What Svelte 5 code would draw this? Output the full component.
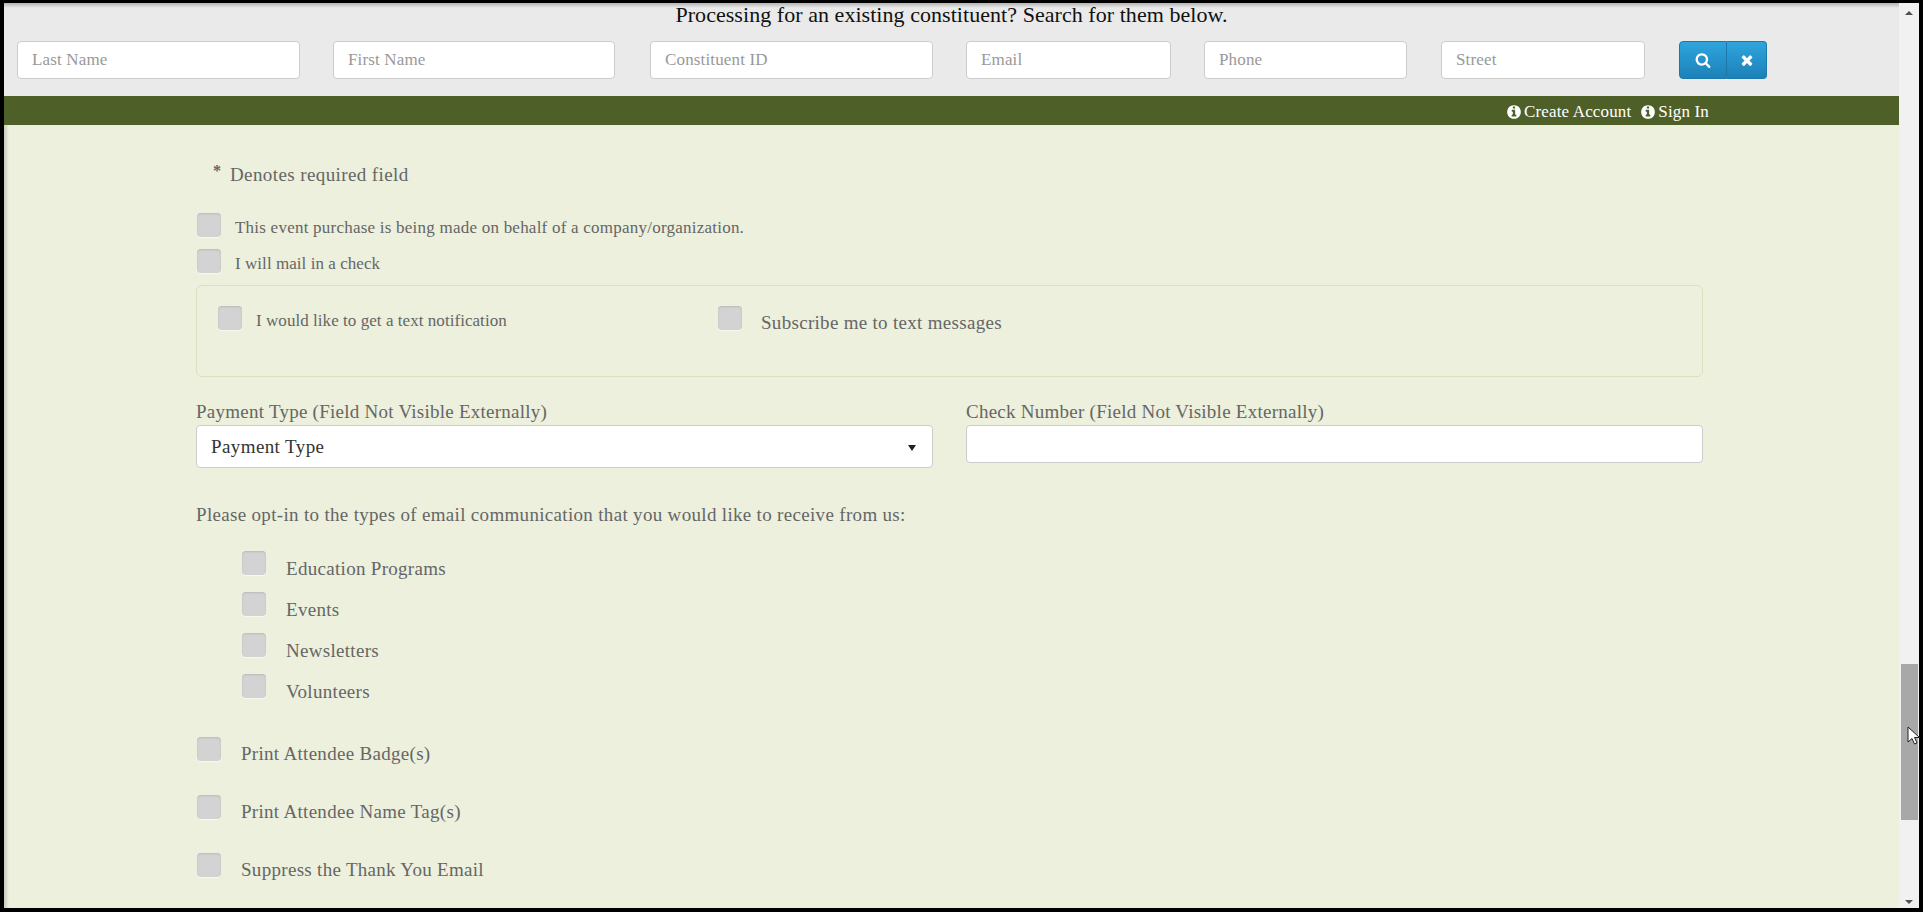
<script>
    const searchFields = [
        { label: "Last Name", cls: "w283" },
        { label: "First Name", cls: "w282" },
        { label: "Constituent ID", cls: "w283" },
        { label: "Email", cls: "w205" },
        { label: "Phone", cls: "w203" },
        { label: "Street", cls: "w204" }
    ];
    const optIns = ["Education Programs", "Events", "Newsletters", "Volunteers"];
    const extras = ["Print Attendee Badge(s)", "Print Attendee Name Tag(s)", "Suppress the Thank You Email"];
</script>

<div class="frame">
    <div class="page">
        <header class="search">
            <h1>Processing for an existing constituent? Search for them below.</h1>
            <div class="search-row">
                {#each searchFields as field}
                    <input class="search-input {field.cls}" type="text" placeholder={field.label}>
                {/each}
                <div class="btn-group">
                    <button type="button" class="btn first" aria-label="Search">
                        <svg viewBox="0 0 1792 1792" width="16" height="16"><path fill="#fff" d="M1216 832q0-185-131.500-316.500t-316.500-131.500-316.500 131.500-131.500 316.500 131.500 316.500 316.500 131.500 316.500-131.500 131.500-316.500zm512 832q0 52-38 90t-90 38q-54 0-90-38l-343-342q-179 124-399 124-143 0-273.500-55.500t-225-150-150-225-55.500-273.500 55.500-273.500 150-225 225-150 273.500-55.500 273.500 55.500 225 150 150 225 55.500 273.500q0 220-124 399l343 343q37 37 37 90z"/></svg>
                    </button>
                    <button type="button" class="btn" aria-label="Clear">
                        <svg viewBox="0 0 1792 1792" width="16" height="16"><path fill="#fff" d="M1490 1322q0 40-28 68l-136 136q-28 28-68 28t-68-28l-294-294-294 294q-28 28-68 28t-68-28l-136-136q-28-28-28-68t28-68l294-294-294-294q-28-28-28-68t28-68l136-136q28-28 68-28t68 28l294 294 294-294q28-28 68-28t68 28l136 136q28 28 28 68t-28 68l-294 294 294 294q28 28 28 68z"/></svg>
                    </button>
                </div>
            </div>
        </header>

        <nav class="account-bar">
            <a href="#create">
                <svg viewBox="0 0 1792 1792" width="16" height="16"><path fill="#fff" d="M1152 1376v-160q0-14-9-23t-23-9h-96v-512q0-14-9-23t-23-9h-320q-14 0-23 9t-9 23v160q0 14 9 23t23 9h96v320h-96q-14 0-23 9t-9 23v160q0 14 9 23t23 9h448q14 0 23-9t9-23zm-128-896v-160q0-14-9-23t-23-9h-192q-14 0-23 9t-9 23v160q0 14 9 23t23 9h192q14 0 23-9t9-23zm640 416q0 209-103 385.500t-279.500 279.500-385.500 103-385.500-103-279.500-279.500-103-385.500 103-385.500 279.500-279.500 385.500-103 385.500 103 279.500 279.500 103 385.500z"/></svg>
                Create Account
            </a>
            <a href="#signin">
                <svg viewBox="0 0 1792 1792" width="16" height="16"><path fill="#fff" d="M1152 1376v-160q0-14-9-23t-23-9h-96v-512q0-14-9-23t-23-9h-320q-14 0-23 9t-9 23v160q0 14 9 23t23 9h96v320h-96q-14 0-23 9t-9 23v160q0 14 9 23t23 9h448q14 0 23-9t9-23zm-128-896v-160q0-14-9-23t-23-9h-192q-14 0-23 9t-9 23v160q0 14 9 23t23 9h192q14 0 23-9t9-23zm640 416q0 209-103 385.500t-279.500 279.500-385.500 103-385.500-103-279.500-279.500-103-385.500 103-385.500 279.500-279.500 385.500-103 385.500 103 279.500 279.500 103 385.500z"/></svg>
                Sign In
            </a>
        </nav>

        <main class="form">
            <p class="required"><span class="star">*</span>Denotes required field</p>

            <label class="check small first-check"><input type="checkbox"><span>This event purchase is being made on behalf of a company/organization.</span></label>
            <label class="check small tight second-check"><input type="checkbox"><span>I will mail in a check</span></label>

            <div class="text-box">
                <label class="check small tight notify"><input type="checkbox"><span>I would like to get a text notification</span></label>
                <label class="check subscribe"><input type="checkbox"><span>Subscribe me to text messages</span></label>
            </div>

            <div class="two-col">
                <div class="col">
                    <div class="field-label">Payment Type (Field Not Visible Externally)</div>
                    <div class="select-wrap">
                        <select>
                            <option>Payment Type</option>
                        </select>
                        <span class="arrow"></span>
                    </div>
                </div>
                <div class="col">
                    <div class="field-label">Check Number (Field Not Visible Externally)</div>
                    <input class="text-input" type="text">
                </div>
            </div>

            <p class="opt-in">Please opt-in to the types of email communication that you would like to receive from us:</p>

            <div class="opt-list">
                {#each optIns as item}
                    <label class="check opt"><input type="checkbox"><span>{item}</span></label>
                {/each}
            </div>

            <div class="extras">
                {#each extras as item}
                    <label class="check extra"><input type="checkbox"><span>{item}</span></label>
                {/each}
            </div>
        </main>
    </div>

    <aside class="scrollbar">
        <span class="tri up"></span>
        <div class="thumb"></div>
        <span class="tri down"></span>
    </aside>

    <svg class="cursor" viewBox="0 0 13 20" width="13" height="20"><path d="M1 1v15l4-3.500 2.500 5.500 2.500-1-2.500-5.500h5z" fill="#fff" stroke="#222" stroke-width="1"/></svg>
</div>

<style>
    :global(body) {
        margin: 0;
    }
    .frame {
        position: relative;
        display: flex;
        width: 1923px;
        height: 912px;
        box-sizing: border-box;
        padding: 3px 4px 4px 4px;
        background: #000;
        overflow: hidden;
        font-family: "Liberation Serif", serif;
    }
    .page {
        flex: 1;
        min-width: 0;
        background: #ecf0dd;
        color: #666;
    }
    .search {
        height: 93px;
        box-sizing: border-box;
        background: linear-gradient(#b4b4b4, #eaeaea 5px);
    }
    h1 {
        margin: 0;
        padding-top: 1px;
        height: 24px;
        text-align: center;
        font-size: 22px;
        line-height: 22px;
        font-weight: 400;
        color: #111;
        letter-spacing: 0.05px;
    }
    .search-row {
        display: flex;
        padding: 13px 0 0 13px;
    }
    .search-input {
        height: 38px;
        box-sizing: border-box;
        margin: 0;
        padding: 0 14px;
        border: 1px solid #ccc;
        border-radius: 4px;
        background: #fff;
        font-family: inherit;
        font-size: 17px;
        letter-spacing: 0.15px;
    }
    .search-input::placeholder {
        color: #999;
        opacity: 1;
    }
    .w283 { width: 283px; margin-right: 33px; }
    .w282 { width: 282px; margin-right: 35px; }
    .w205 { width: 205px; margin-right: 33px; }
    .w203 { width: 203px; margin-right: 34px; }
    .w204 { width: 204px; margin-right: 34px; }
    .btn-group {
        display: flex;
    }
    .btn {
        width: 40px;
        height: 38px;
        padding: 0;
        display: flex;
        align-items: center;
        justify-content: center;
        border: 1px solid #1b78ab;
        border-left: none;
        border-radius: 0 4px 4px 0;
        background: linear-gradient(#2fa5dd, #1c81b8);
    }
    .btn.first {
        width: 48px;
        border-left: 1px solid #1b78ab;
        border-radius: 4px 0 0 4px;
    }
    .account-bar {
        display: flex;
        justify-content: flex-end;
        gap: 9px;
        height: 26px;
        padding: 3px 190px 0 0;
        align-items: center;
        background: #4f5f28;
    }
    .account-bar a {
        display: flex;
        align-items: center;
        gap: 2px;
        color: #fff;
        text-decoration: none;
        font-size: 17px;
        letter-spacing: 0.15px;
    }
    .form {
        padding: 0 0 0 192px;
        background: linear-gradient(to right, #c8cbbb, #ecf0dd 5px) no-repeat;
        height: 783px;
    }
    .required {
        position: relative;
        margin: 0;
        padding: 39px 0 0 34px;
        font-size: 19px;
        line-height: 22px;
        letter-spacing: 0.4px;
    }
    .star {
        position: absolute;
        left: 17px;
        top: 35px;
        font-size: 16px;
        font-weight: 700;
    }
    .check {
        display: flex;
        align-items: flex-start;
        height: 24px;
        font-size: 19px;
        line-height: 20px;
        letter-spacing: 0.3px;
    }
    .check input {
        appearance: none;
        flex: none;
        width: 24px;
        height: 24px;
        margin: 0;
        border-radius: 4px;
        background: #d3d3d3;
        box-shadow: inset 0 1px 2px rgba(0, 0, 0, 0.12), 0 1px 0 rgba(255, 255, 255, 0.6);
    }
    .check.small {
        font-size: 17px;
        letter-spacing: 0.23px;
    }
    .check.small.tight {
        letter-spacing: 0.05px;
    }
    .first-check {
        margin: 27px 0 0 1px;
    }
    .first-check span { padding: 5px 0 0 14px; }
    .second-check {
        margin: 12px 0 0 1px;
    }
    .second-check span { padding: 5px 0 0 14px; }
    .text-box {
        display: flex;
        width: 1507px;
        height: 92px;
        box-sizing: border-box;
        margin-top: 12px;
        padding: 20px 0 0 21px;
        border: 1px solid #d7e1bd;
        border-radius: 6px;
    }
    .notify {
        width: 500px;
    }
    .notify span { padding: 5px 0 0 14px; }
    .subscribe span { padding: 7px 0 0 19px; }
    .two-col {
        display: flex;
        gap: 33px;
        width: 1507px;
        margin-top: 24px;
    }
    .col {
        width: 737px;
    }
    .field-label {
        font-size: 19px;
        line-height: 22px;
        letter-spacing: 0.25px;
        margin-bottom: 2px;
    }
    .select-wrap {
        position: relative;
    }
    select {
        appearance: none;
        display: block;
        width: 100%;
        height: 43px;
        padding: 0 14px;
        border: 1px solid #ccc;
        border-radius: 4px;
        background: #fff;
        color: #333;
        font-family: inherit;
        font-size: 19px;
        letter-spacing: 0.4px;
    }
    .arrow {
        position: absolute;
        right: 17px;
        top: 20px;
        border-left: 4px solid transparent;
        border-right: 4px solid transparent;
        border-top: 6px solid #222;
    }
    .text-input {
        display: block;
        width: 100%;
        height: 38px;
        box-sizing: border-box;
        border: 1px solid #ccc;
        border-radius: 4px;
        background: #fff;
    }
    .opt-in {
        margin: 36px 0 0;
        font-size: 19px;
        line-height: 22px;
        letter-spacing: 0.32px;
    }
    .opt-list {
        display: flex;
        flex-direction: column;
        gap: 17px;
        margin: 25px 0 0 46px;
    }
    .opt span { padding: 8px 0 0 20px; }
    .extras {
        display: flex;
        flex-direction: column;
        gap: 34px;
        margin: 39px 0 0 1px;
    }
    .extra span { padding: 7px 0 0 20px; }
    .scrollbar {
        position: relative;
        display: flex;
        flex-direction: column;
        align-items: center;
        flex: none;
        width: 20px;
        background: #f1f1f1;
    }
    .thumb {
        width: 17px;
        height: 156px;
        margin-top: 661px;
        background: #a8a8a8;
    }
    .tri {
        position: absolute;
        border-left: 4px solid transparent;
        border-right: 4px solid transparent;
    }
    .tri.up {
        top: 8px;
        border-bottom: 4px solid #505050;
    }
    .tri.down {
        bottom: 4px;
        border-top: 4px solid #505050;
    }
    .cursor {
        position: absolute;
        left: 1907px;
        top: 726px;
    }
</style>
